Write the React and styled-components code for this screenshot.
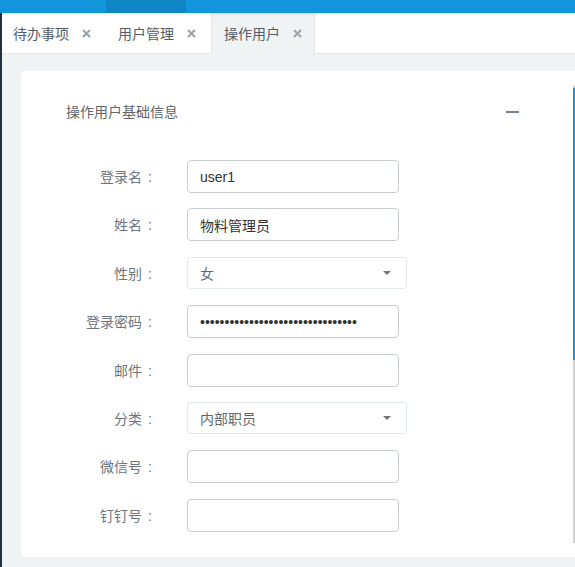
import React from "react";
import styled, { createGlobalStyle } from "styled-components";

const GlobalStyle = createGlobalStyle`
  html, body {
    margin: 0;
    padding: 0;
    background: #eff3f4;
    font-family: "Liberation Sans", "Noto Sans CJK SC", sans-serif;
  }
  * { box-sizing: border-box; }
`;

const tabs = [
  { name: "待办事项" },
  { name: "用户管理" },
  { name: "操作用户", active: true },
];

const fields = [
  { label: "登录名", kind: "input", value: "user1" },
  { label: "姓名", kind: "input", value: "物料管理员" },
  { label: "性别", kind: "select", value: "女" },
  { label: "登录密码", kind: "password", value: "12345678901234567890123456789012" },
  { label: "邮件", kind: "input", value: "" },
  { label: "分类", kind: "select", value: "内部职员" },
  { label: "微信号", kind: "input", value: "" },
  { label: "钉钉号", kind: "input", value: "" },
];

function CloseIcon() {
  return (
    <svg width="9" height="9" viewBox="0 0 9 9">
      <path d="M1 1L8 8M8 1L1 8" stroke="#9aa3ab" strokeWidth="2" />
    </svg>
  );
}

export default function App() {
  return (
    <>
      <GlobalStyle />
      <Page>
        <TopBar>
          <NavActive />
        </TopBar>
        <Body>
          <SideEdge />
          <Main>
            <TabBar>
              {tabs.map((t) => (
                <Tab key={t.name} $active={t.active}>
                  <span>{t.name}</span>
                  <CloseIcon />
                </Tab>
              ))}
              <TabFill />
            </TabBar>
            <Content>
              <Card>
                <CardHeader>
                  <Title>操作用户基础信息</Title>
                  <Collapse />
                </CardHeader>
                <Form>
                  {fields.map((f) => (
                    <React.Fragment key={f.label}>
                      <Label>
                        {f.label}
                        <Colon>:</Colon>
                      </Label>
                      {f.kind === "select" ? (
                        <SelectBox>
                          <span>{f.value}</span>
                          <Caret />
                        </SelectBox>
                      ) : (
                        <Input
                          type={f.kind === "password" ? "password" : "text"}
                          defaultValue={f.value}
                        />
                      )}
                    </React.Fragment>
                  ))}
                </Form>
              </Card>
            </Content>
          </Main>
        </Body>
        <ScrollTrack />
      </Page>
    </>
  );
}

const Page = styled.div`
  position: relative;
  height: 567px;
  overflow: hidden;
  display: flex;
  flex-direction: column;
`;

const TopBar = styled.div`
  height: 13px;
  background: #1296db;
  display: flex;
  padding-left: 106px;
  box-shadow: 0 1px 3px rgba(0, 0, 0, 0.12);
  position: relative;
  z-index: 1;
`;

const NavActive = styled.div`
  width: 80px;
  background: #0f86c5;
`;

const Body = styled.div`
  flex: 1;
  display: flex;
  min-height: 0;
`;

const SideEdge = styled.div`
  width: 2px;
  background: #22313d;
`;

const Main = styled.div`
  flex: 1;
  min-width: 0;
  display: flex;
  flex-direction: column;
`;

const TabBar = styled.div`
  height: 41px;
  display: flex;
  background: #fff;
`;

const Tab = styled.div`
  width: 104px;
  display: flex;
  align-items: center;
  gap: 13px;
  padding-left: ${(p) => (p.$active ? "12px" : "11px")};
  font-size: 14px;
  color: #555d64;
  background: ${(p) => (p.$active ? "#eff3f4" : "#fff")};
  border-bottom: 1px solid ${(p) => (p.$active ? "#eff3f4" : "#e3e7e9")};
  border-left: ${(p) => (p.$active ? "1px solid #e3e7e9" : "none")};
  border-right: ${(p) => (p.$active ? "1px solid #e3e7e9" : "none")};
  ${(p) => (p.$active ? "" : "&:first-child { width: 105px; }")}
`;

const TabFill = styled.div`
  flex: 1;
  border-bottom: 1px solid #e3e7e9;
`;

const Content = styled.div`
  flex: 1;
  overflow: hidden;
  padding: 17px 0 0 19px;
`;

const Card = styled.div`
  width: 620px;
  height: 486px;
  background: #fff;
  border-radius: 4px;
`;

const CardHeader = styled.div`
  width: 498px;
  padding: 31px 0 0 45px;
  display: flex;
  align-items: center;
  justify-content: space-between;
  height: 51px;
`;

const Title = styled.div`
  font-size: 14px;
  line-height: 20px;
  color: #5f666c;
`;

const Collapse = styled.span`
  width: 13px;
  height: 2px;
  background: #76818b;
`;

const Form = styled.div`
  margin-top: 38px;
  display: grid;
  grid-template-columns: 135px auto;
  grid-auto-rows: 33px;
  column-gap: 31px;
  row-gap: 15.4px;
  justify-content: start;
`;

const Label = styled.div`
  font-size: 14px;
  color: #6a7680;
  text-align: right;
  line-height: 34px;
  white-space: nowrap;
`;

const Colon = styled.span`
  margin: 0 4px 0 6px;
`;

const Input = styled.input`
  width: 212px;
  height: 33px;
  border: 1px solid #c9ccd0;
  border-radius: 4px;
  padding: 0 12px;
  font-family: inherit;
  font-size: 14px;
  color: #333;
  outline: none;
  background: #fff;
`;

const SelectBox = styled.div`
  width: 220px;
  height: 32px;
  border: 1px solid #e3e8ea;
  border-radius: 3px;
  padding: 0 15px 0 12px;
  display: flex;
  align-items: center;
  justify-content: space-between;
  font-size: 14px;
  color: #5f686f;
`;

const Caret = styled.span`
  width: 0;
  height: 0;
  border-left: 4px solid transparent;
  border-right: 4px solid transparent;
  border-top: 4px solid #6f777d;
`;

const ScrollTrack = styled.div`
  position: absolute;
  right: 0;
  top: 86px;
  width: 2px;
  height: 457px;
  background: linear-gradient(
    to bottom,
    #c8c8c8 0,
    #c8c8c8 2px,
    #1296db 2px,
    #1296db 60%,
    #d0d0d0 60%
  );
`;
